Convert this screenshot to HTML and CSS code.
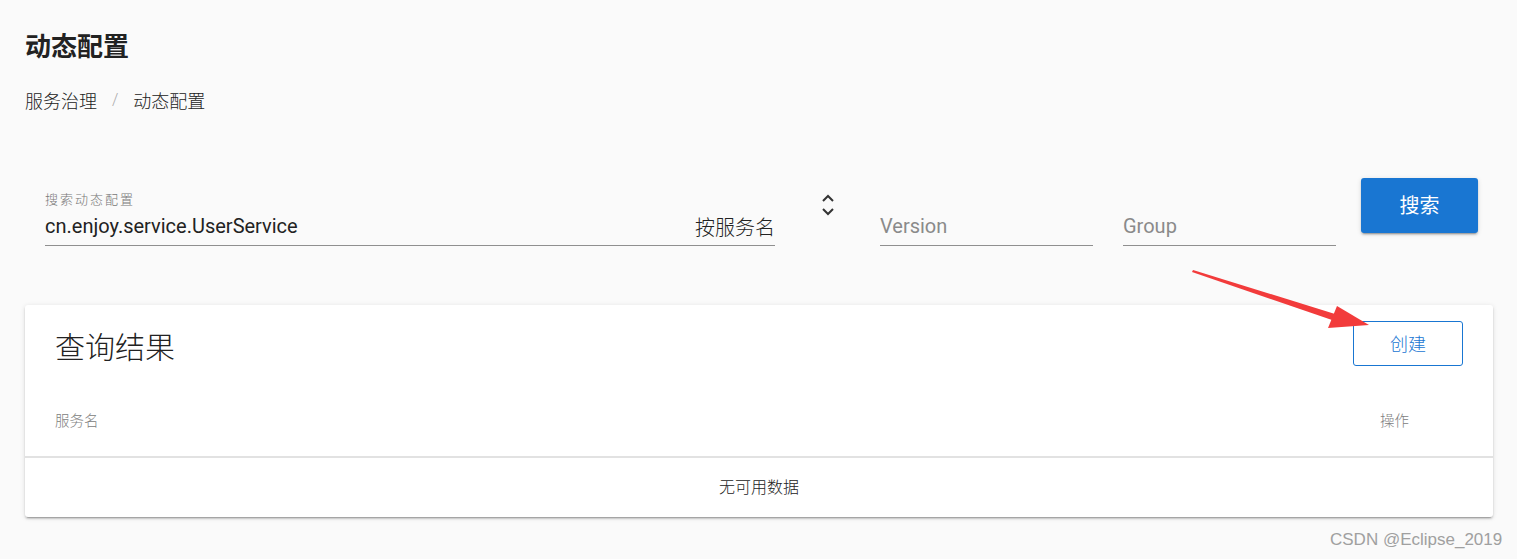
FILE: index.html
```html
<!DOCTYPE html>
<html lang="zh">
<head>
<meta charset="utf-8">
<title>动态配置</title>
<link rel="stylesheet" href="styles.css">
</head>
<body>
<div class="page">
  <h1 class="title">动态配置</h1>
  <div class="breadcrumb">
    <span class="crumb">服务治理</span>
    <span class="sep">/</span>
    <span class="crumb">动态配置</span>
  </div>

  <div class="search-row">
    <div class="field field-main">
      <div class="field-label">搜索动态配置</div>
      <div class="field-line">
        <span class="field-value">cn.enjoy.service.UserService</span>
        <span class="field-suffix">按服务名</span>
      </div>
    </div>
    <div class="toggle">
      <svg width="14" height="24" viewBox="0 0 14 24">
        <path d="M2 8 L7 3 L12 8" fill="none" stroke="#333" stroke-width="2"/>
        <path d="M2 16 L7 21 L12 16" fill="none" stroke="#333" stroke-width="2"/>
      </svg>
    </div>
    <div class="field field-small">
      <div class="field-line"><span class="placeholder">Version</span></div>
    </div>
    <div class="field field-small field-group">
      <div class="field-line"><span class="placeholder">Group</span></div>
    </div>
    <button class="btn-search">搜索</button>
  </div>

  <div class="card">
    <div class="card-head">
      <div class="card-title">查询结果</div>
      <button class="btn-create">创建</button>
    </div>
    <div class="table-head">
      <span>服务名</span>
      <span>操作</span>
    </div>
    <div class="table-empty">无可用数据</div>
  </div>
</div>

<svg class="annot-arrow" width="200" height="80" viewBox="0 0 200 80">
  <polygon points="8,8 150,52 147,58 7,10" fill="#f23b3b"/>
  <polygon points="184,63 152,44 143,66" fill="#f23b3b"/>
</svg>

<div class="watermark">CSDN @Eclipse_2019</div>
</body>
</html>
```

FILE: styles.css
```css
html, body {
  margin: 0;
  padding: 0;
}
body {
  background: #fafafa;
  font-family: Roboto, "Noto Sans CJK SC", sans-serif;
  color: #222;
  width: 1517px;
  height: 559px;
  overflow: hidden;
  position: relative;
}
.page {
  padding: 0 24px 0 25px;
}
.title {
  margin: 0;
  padding-top: 29px;
  font-size: 26px;
  line-height: 32px;
  font-weight: 700;
  color: #222;
  font-family: "Noto Sans CJK SC", sans-serif;
}
.breadcrumb {
  margin-top: 27px;
  display: flex;
  align-items: center;
  font-family: "Noto Sans CJK SC", sans-serif;
  font-size: 18px;
  line-height: 24px;
  color: #222;
  font-weight: 300;
}
.sep {
  color: #aaa;
  margin: 0 15px;
  font-family: Roboto, sans-serif;
  font-size: 16px;
}
.search-row {
  margin-top: 66px;
  padding-left: 20px;
  display: flex;
  align-items: flex-start;
}
.field {
  border-bottom: 1px solid #8f8f8f;
  padding-bottom: 5px;
  box-sizing: border-box;
}
.field-main {
  width: 730px;
  padding-top: 13px;
}
.field-label {
  font-family: "Noto Sans CJK SC", sans-serif;
  font-size: 13px;
  line-height: 16px;
  letter-spacing: 2px;
  color: #777;
  margin-bottom: 5px;
  font-weight: 300;
}
.field-line {
  display: flex;
  justify-content: space-between;
  align-items: center;
  height: 28px;
  font-size: 20px;
}
.field-value {
  color: #222;
}
.field-suffix {
  font-family: "Noto Sans CJK SC", sans-serif;
  color: #222;
  font-size: 20px;
  font-weight: 300;
}
.toggle {
  width: 105px;
  display: flex;
  justify-content: center;
  padding-top: 15px;
}
.field-small {
  width: 213px;
  padding-top: 34px;
}
.field-group {
  margin-left: 30px;
}
.placeholder {
  color: #8a8a8a;
}
.btn-search {
  margin-left: 25px;
  width: 117px;
  height: 55px;
  border: none;
  border-radius: 3px;
  background: #1976d2;
  color: #fff;
  font-family: "Noto Sans CJK SC", sans-serif;
  font-size: 20px;
  box-shadow: 0 3px 1px -2px rgba(0,0,0,.2), 0 2px 2px 0 rgba(0,0,0,.14), 0 1px 5px 0 rgba(0,0,0,.12);
  padding: 0 0 2px 0;
}
.card {
  margin-top: 59px;
  background: #fff;
  border-radius: 3px;
  box-shadow: 0 3px 1px -2px rgba(0,0,0,.2), 0 2px 2px 0 rgba(0,0,0,.14), 0 1px 5px 0 rgba(0,0,0,.12);
}
.card-head {
  display: flex;
  justify-content: space-between;
  align-items: flex-start;
  padding: 16px 30px 0 30px;
}
.card-title {
  font-family: "Noto Sans CJK SC", sans-serif;
  font-size: 30px;
  line-height: 45px;
  color: #222;
  font-weight: 300;
  padding-top: 2px;
}
.btn-create {
  width: 110px;
  height: 45px;
  border: 1px solid #1976d2;
  border-radius: 3px;
  background: #fff;
  color: #1976d2;
  font-family: "Noto Sans CJK SC", sans-serif;
  font-size: 18px;
  font-weight: 300;
  padding: 0 0 2px 0;
}
.table-head {
  display: flex;
  justify-content: space-between;
  padding: 42px 84px 26px 30px;
  font-family: "Noto Sans CJK SC", sans-serif;
  font-size: 14.5px;
  line-height: 20px;
  color: #808080;
  font-weight: 300;
  border-bottom: 2px solid #e2e2e2;
}
.table-empty {
  height: 59px;
  box-sizing: border-box;
  line-height: 56px;
  padding-bottom: 3px;
  text-align: center;
  font-family: "Noto Sans CJK SC", sans-serif;
  font-size: 16px;
  color: #222;
  font-weight: 300;
}
.annot-arrow {
  position: absolute;
  left: 1185px;
  top: 262px;
}
.watermark {
  position: absolute;
  left: 1330px;
  top: 530px;
  font-family: "Liberation Sans", sans-serif;
  font-size: 17px;
  line-height: 20px;
  color: #a0a0a0;
}
```
